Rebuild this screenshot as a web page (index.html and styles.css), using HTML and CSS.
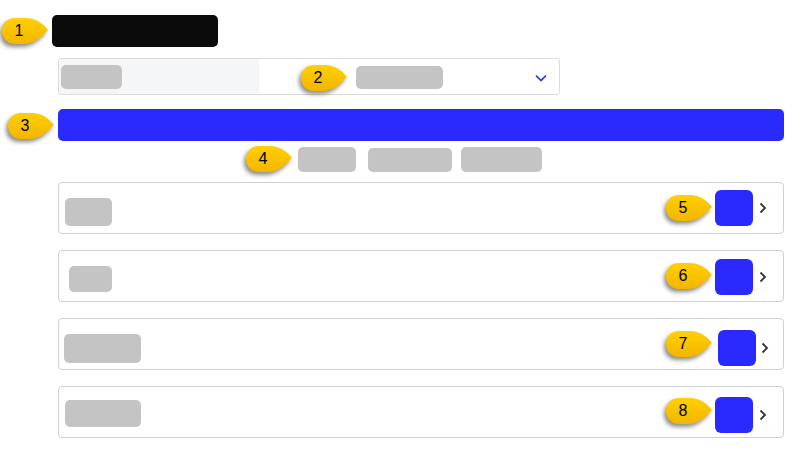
FILE: index.html
```html
<!DOCTYPE html>
<html lang="en">
<head>
<meta charset="utf-8">
<title>Annotated form</title>
<link rel="stylesheet" href="styles.css">
</head>
<body>
<main class="page">
  <div class="title"></div>
  <div class="select">
    <div class="select-left"><span class="pill pill-a"></span></div>
    <div class="select-right">
      <span class="pill pill-b"></span>
      <svg class="chev-down" width="12" height="8" viewBox="0 0 12 8"><path d="M1 1.5 L6 6.5 L11 1.5" fill="none" stroke="#2a2aff" stroke-width="1.6"/></svg>
    </div>
  </div>
  <div class="bar"></div>
  <div class="tabs">
    <span class="pill tab1"></span>
    <span class="pill tab2"></span>
    <span class="pill tab3"></span>
  </div>
  <div class="rows">
    <div class="row r1">
      <span class="pill rp"></span>
      <div class="row-end"><span class="sq"></span><svg class="chev-right" width="8" height="12" viewBox="0 0 8 12"><path d="M1.5 1.5 L6 6 L1.5 10.5" fill="none" stroke="#333" stroke-width="1.8"/></svg></div>
    </div>
    <div class="row r2">
      <span class="pill rp"></span>
      <div class="row-end"><span class="sq"></span><svg class="chev-right" width="8" height="12" viewBox="0 0 8 12"><path d="M1.5 1.5 L6 6 L1.5 10.5" fill="none" stroke="#333" stroke-width="1.8"/></svg></div>
    </div>
    <div class="row r3">
      <span class="pill rp"></span>
      <div class="row-end"><span class="sq"></span><svg class="chev-right" width="8" height="12" viewBox="0 0 8 12"><path d="M1.5 1.5 L6 6 L1.5 10.5" fill="none" stroke="#333" stroke-width="1.8"/></svg></div>
    </div>
    <div class="row r4">
      <span class="pill rp"></span>
      <div class="row-end"><span class="sq"></span><svg class="chev-right" width="8" height="12" viewBox="0 0 8 12"><path d="M1.5 1.5 L6 6 L1.5 10.5" fill="none" stroke="#333" stroke-width="1.8"/></svg></div>
    </div>
  </div>
</main>

<svg width="0" height="0" class="defs">
  <defs>
    <linearGradient id="yg" x1="0" y1="0" x2="0" y2="1">
      <stop offset="0" stop-color="#ffd000"/>
      <stop offset="1" stop-color="#f2b500"/>
    </linearGradient>
    <path id="drop" d="M47 13 C42 7 36 1 24 1 L14 1 C6 1 1 7 1 14 C1 21 6 27 14 27 L22 27 C34 27 40 20 47 13 Z"/>
  </defs>
</svg>

<div class="callout c1"><svg viewBox="0 0 48 28" width="48" height="28"><use href="#drop" fill="url(#yg)"/></svg><span>1</span></div>
<div class="callout c2"><svg viewBox="0 0 48 28" width="48" height="28"><use href="#drop" fill="url(#yg)"/></svg><span>2</span></div>
<div class="callout c3"><svg viewBox="0 0 48 28" width="48" height="28"><use href="#drop" fill="url(#yg)"/></svg><span>3</span></div>
<div class="callout c4"><svg viewBox="0 0 48 28" width="48" height="28"><use href="#drop" fill="url(#yg)"/></svg><span>4</span></div>
<div class="callout c5"><svg viewBox="0 0 48 28" width="48" height="28"><use href="#drop" fill="url(#yg)"/></svg><span>5</span></div>
<div class="callout c6"><svg viewBox="0 0 48 28" width="48" height="28"><use href="#drop" fill="url(#yg)"/></svg><span>6</span></div>
<div class="callout c7"><svg viewBox="0 0 48 28" width="48" height="28"><use href="#drop" fill="url(#yg)"/></svg><span>7</span></div>
<div class="callout c8"><svg viewBox="0 0 48 28" width="48" height="28"><use href="#drop" fill="url(#yg)"/></svg><span>8</span></div>
</body>
</html>
```

FILE: styles.css
```css
* { box-sizing: border-box; }

html, body {
  margin: 0;
  padding: 0;
  background: #ffffff;
  font-family: "Liberation Sans", Arial, sans-serif;
}

body {
  position: relative;
  width: 803px;
  height: 452px;
  overflow: hidden;
}

.page {
  padding: 15px 19px 0 58px;
}

.title {
  margin-left: -6px;
  width: 166px;
  height: 32px;
  background: #0b0b0b;
  border-radius: 5px;
}

.pill {
  display: block;
  background: #c4c4c4;
  border-radius: 5px;
}

.select {
  margin-top: 11px;
  width: 502px;
  height: 37px;
  border: 1px solid #dcdcdc;
  border-radius: 3px;
  display: flex;
  overflow: hidden;
}

.select-left {
  width: 200px;
  background: #f5f6f8;
  padding: 6px 0 0 2px;
}

.pill-a {
  width: 61px;
  height: 24px;
}

.select-right {
  flex: 1;
  display: flex;
  align-items: center;
  justify-content: space-between;
  padding: 0 12px 0 97px;
}

.pill-b {
  width: 87px;
  height: 23px;
  margin-top: 1px;
}

.chev-down {
  display: block;
  margin-top: 2px;
}

.bar {
  margin-top: 14px;
  height: 32px;
  background: #2a2aff;
  border-radius: 5px;
}

.tabs {
  margin-top: 6px;
  padding-left: 240px;
  display: flex;
  align-items: flex-start;
}

.tab1 { width: 58px; height: 25px; }
.tab2 { width: 84px; height: 24px; margin-left: 12px; margin-top: 1px; }
.tab3 { width: 81px; height: 25px; margin-left: 9px; }

.rows {
  margin-top: 10px;
  display: flex;
  flex-direction: column;
  gap: 16px;
}

.row {
  height: 52px;
  border: 1px solid #cfcfcf;
  border-radius: 4px;
  display: flex;
  align-items: flex-start;
  justify-content: space-between;
  padding-right: 16px;
}

.rp { margin-top: 15px; }

.row-end {
  display: flex;
  align-items: center;
  gap: 6px;
}

.sq {
  display: block;
  width: 38px;
  height: 36px;
  background: #2a2aff;
  border-radius: 6px;
}

.chev-right { display: block; }

.r1 .rp { width: 47px; height: 28px; margin-left: 6px; }
.r1 .row-end { margin-top: 7px; }

.r2 .rp { width: 43px; height: 26px; margin-left: 10px; }
.r2 .row-end { margin-top: 8px; }

.r3 .rp { width: 77px; height: 29px; margin-left: 5px; }
.r3 .row-end { margin-top: 11px; margin-right: -2px; gap: 5px; }

.r4 .rp { width: 76px; height: 27px; margin-left: 6px; margin-top: 13px; }
.r4 .row-end { margin-top: 10px; margin-right: 0; }

.defs {
  position: absolute;
  width: 0;
  height: 0;
}

.callout {
  position: absolute;
  width: 48px;
  height: 28px;
}

.callout svg {
  position: absolute;
  left: 0;
  top: 0;
  filter: drop-shadow(-2px 3px 2px rgba(0, 0, 0, 0.45));
}

.callout span {
  position: absolute;
  left: 0;
  top: 0;
  width: 36px;
  height: 28px;
  line-height: 28px;
  text-align: center;
  font-size: 16px;
  color: #000;
}

.c1 { left: 1px; top: 17px; }
.c2 { left: 300px; top: 64px; }
.c3 { left: 7px; top: 112px; }
.c4 { left: 245px; top: 145px; }
.c5 { left: 665px; top: 194px; }
.c6 { left: 665px; top: 262px; }
.c7 { left: 665px; top: 330px; }
.c8 { left: 665px; top: 397px; }
```
